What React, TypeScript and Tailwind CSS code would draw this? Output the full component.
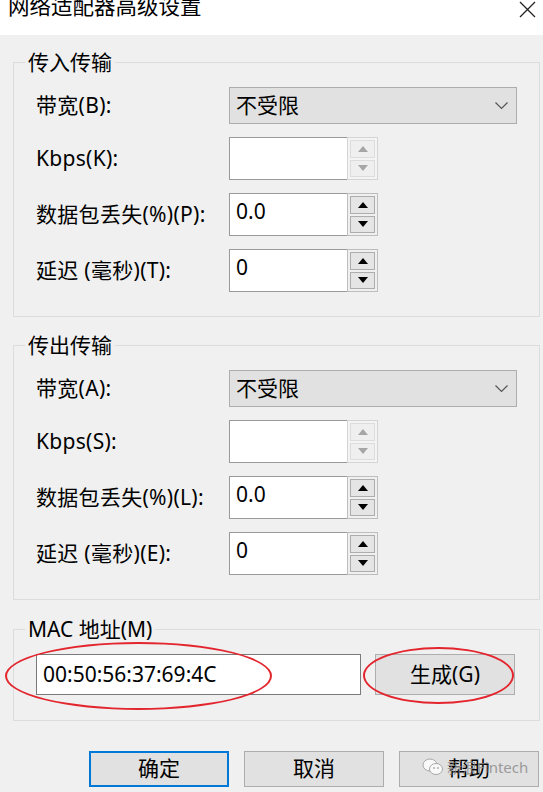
import React from "react";

const font = "font-['Noto_Sans','Noto_Sans_CJK_SC',sans-serif]";

function Arrow({ up, disabled }: { up?: boolean; disabled?: boolean }) {
  const color = disabled ? "#a6a6a6" : "#000000";
  return (
    <svg width="10" height="6" viewBox="0 0 10 6">
      {up ? (
        <polygon points="0,6 10,6 5,0" fill={color} />
      ) : (
        <polygon points="0,0 10,0 5,6" fill={color} />
      )}
    </svg>
  );
}

function Spinner({ value, disabled }: { value?: string; disabled?: boolean }) {
  return (
    <div className="flex h-[43px] w-[149px]">
      <div className="flex-1 border border-r-0 border-[#9a9a9a] bg-white px-[6px] pt-[3px] text-[21px] leading-[28px] text-black">
        {value}
      </div>
      <div
        className={`flex w-[31px] flex-col gap-[2px] border p-[2px] ${
          disabled ? "border-[#d4d4d4] bg-[#f4f4f4]" : "border-[#bdbdbd] bg-[#f0f0f0]"
        }`}
      >
        {[true, false].map((up) => (
          <div
            key={String(up)}
            className={`flex flex-1 items-center justify-center border ${
              disabled ? "border-[#dcdcdc] bg-[#efefef]" : "border-[#adadad] bg-[#e5e5e5]"
            }`}
          >
            <Arrow up={up} disabled={disabled} />
          </div>
        ))}
      </div>
    </div>
  );
}

function Combo() {
  return (
    <div className="flex h-[37px] w-[288px] items-center justify-between border border-[#adadad] bg-[#e1e1e1] pl-[6px] pr-[8px] text-[21px] text-black">
      <span>不受限</span>
      <svg width="13" height="8" viewBox="0 0 13 8">
        <polyline points="0.5,0.5 6.5,6.5 12.5,0.5" fill="none" stroke="#555" strokeWidth="1.2" />
      </svg>
    </div>
  );
}

function Row({ label, children, mt }: { label: string; children: React.ReactNode; mt?: string }) {
  return (
    <div className={`flex items-center ${mt ?? ""}`}>
      <div className="w-[193px] text-[21px] tracking-[0.3px] text-black">{label}</div>
      {children}
    </div>
  );
}

function Group({
  title,
  className,
  children,
}: {
  title: string;
  className?: string;
  children: React.ReactNode;
}) {
  return (
    <fieldset className={`border border-[#dcdcdc] ${className ?? ""}`}>
      <legend className="ml-[11px] px-[3px] text-[21px] leading-[24px] text-black">{title}</legend>
      {children}
    </fieldset>
  );
}

function Transfer({ keys }: { keys: string[] }) {
  return (
    <div className="pb-[24px] pl-[22px] pr-[22px] pt-[13px]">
      <Row label={`带宽(${keys[0]}):`}>
        <Combo />
      </Row>
      <Row label={`Kbps(${keys[1]}):`} mt="mt-[13px]">
        <Spinner disabled />
      </Row>
      <Row label={`数据包丢失(%)(${keys[2]}):`} mt="mt-[13px]">
        <Spinner value="0.0" />
      </Row>
      <Row label={`延迟 (毫秒)(${keys[3]}):`} mt="mt-[13px]">
        <Spinner value="0" />
      </Row>
    </div>
  );
}

export default function App() {
  return (
    <div className={`relative h-[792px] w-[543px] overflow-hidden bg-[#f0f0f0] ${font}`}>
      {/* title bar */}
      <div className="flex h-[35px] items-start justify-between bg-white pl-[8px] pr-[7px]">
        <div className="-mt-[5px] text-[21.5px] leading-[22px] text-black">网络适配器高级设置</div>
        <svg width="17" height="17" viewBox="0 0 17 17" className="mt-[1px]">
          <path d="M1 1 L16 16 M16 1 L1 16" stroke="#222" strokeWidth="1.3" />
        </svg>
      </div>

      <div className="flex flex-col pl-[13px] pr-[3px]">
        <Group title="传入传输" className="mt-[15px]">
          <Transfer keys={["B", "K", "P", "T"]} />
        </Group>
        <Group title="传出传输" className="mt-[16px]">
          <Transfer keys={["A", "S", "L", "E"]} />
        </Group>
        <Group title="MAC 地址(M)" className="mt-[17px]">
          <div className="flex items-center gap-[14px] pb-[25px] pl-[22px] pt-[13px]">
            <div className="flex h-[41px] w-[325px] items-center border border-[#7a7a7a] bg-white px-[6px] text-[21px] text-black">
              00:50:56:37:69:4C
            </div>
            <div className="flex h-[41px] w-[140px] items-center justify-center border border-[#adadad] bg-[#e1e1e1] text-[21px] text-black">
              生成(G)
            </div>
          </div>
        </Group>

        <div className="mt-[30px] flex gap-[15px] pl-[76px]">
          <div className="flex h-[36px] w-[140px] items-center justify-center border-2 border-[#0078d7] bg-[#e1e1e1] text-[21px] text-black">
            确定
          </div>
          <div className="flex h-[36px] w-[140px] items-center justify-center border border-[#adadad] bg-[#e1e1e1] text-[21px] text-black">
            取消
          </div>
          <div className="flex h-[36px] w-[140px] items-center justify-center border border-[#adadad] bg-[#e1e1e1] text-[21px] text-black">
            帮助
          </div>
        </div>
      </div>

      {/* red annotation ellipses */}
      <div className="absolute left-[5px] top-[642px] h-[68px] w-[267px] rounded-[50%] border-2 border-[#e3262e]" />
      <div className="absolute left-[363px] top-[647px] h-[57px] w-[151px] rounded-[50%] border-2 border-[#e3262e]" />

      {/* watermark */}
      <div className="absolute left-[422px] top-[756px] flex items-center gap-[3px] text-[15px] text-[#8a8a8a] opacity-80">
        <svg width="22" height="18" viewBox="0 0 22 18">
          <ellipse cx="8" cy="7" rx="7" ry="6" fill="white" stroke="#9a9a9a" strokeWidth="1" />
          <ellipse cx="14" cy="11" rx="6.5" ry="5.5" fill="white" stroke="#9a9a9a" strokeWidth="1" />
          <circle cx="12" cy="10" r="0.9" fill="#9a9a9a" />
          <circle cx="16" cy="10" r="0.9" fill="#9a9a9a" />
        </svg>
        <span>新浪Fintech</span>
      </div>
    </div>
  );
}
